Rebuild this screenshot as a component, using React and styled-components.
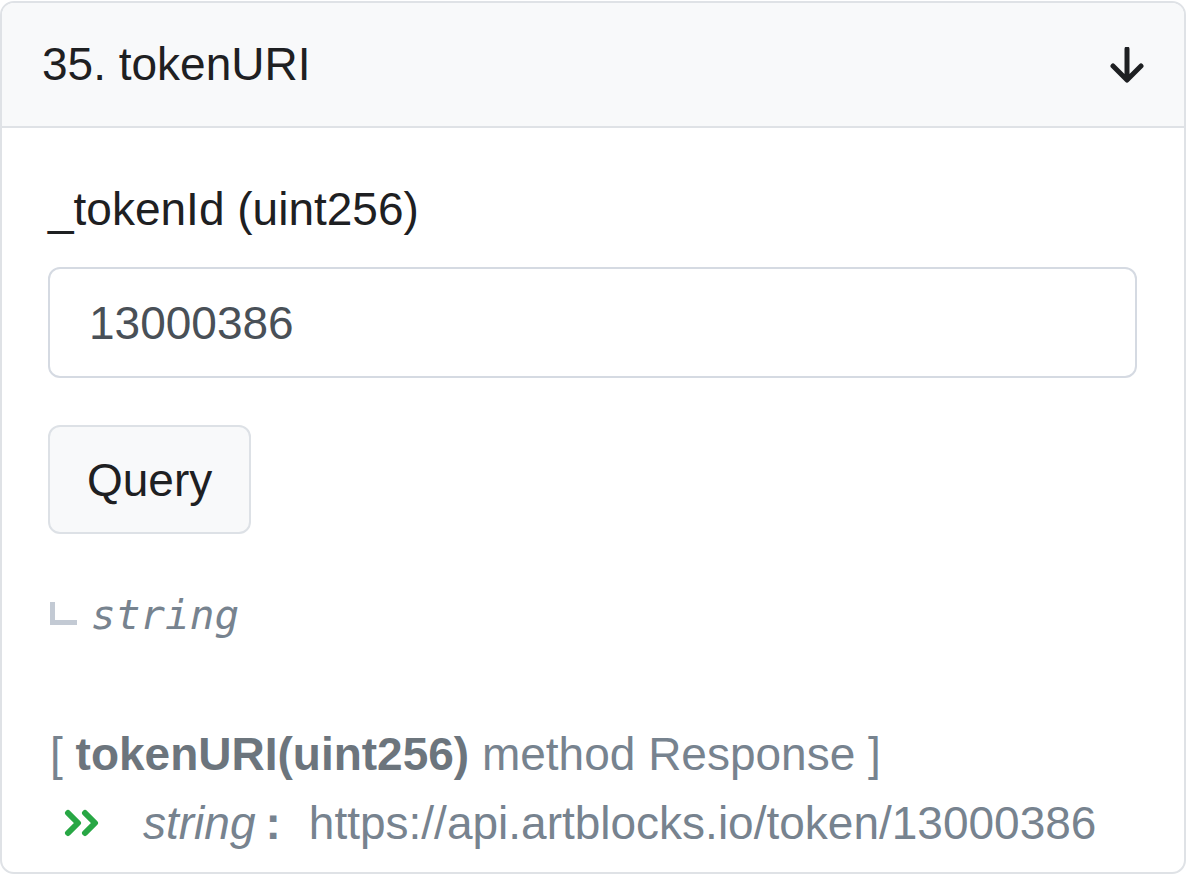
import React from "react";
import styled, { createGlobalStyle } from "styled-components";

const GlobalStyle = createGlobalStyle`
  html, body {
    margin: 0;
    padding: 0;
    background: #ffffff;
  }
  body {
    font-family: "Liberation Sans", Arial, sans-serif;
  }
  * {
    box-sizing: border-box;
  }
`;

const Page = styled.div`
  padding: 1px 1px 0 0;
`;

const Card = styled.div`
  border: 2px solid #dfe2e6;
  border-radius: 14px;
  overflow: hidden;
  background: #fff;
`;

const Header = styled.div`
  display: flex;
  align-items: center;
  justify-content: space-between;
  padding: 27px 40px 27px 40px;
  background: #f8f9fa;
  border-bottom: 2px solid #dfe2e6;
`;

const Title = styled.div`
  font-size: 46px;
  line-height: 1.5;
  color: #1e2022;
`;

const ArrowIcon = styled.svg`
  width: 34px;
  height: 36px;
  margin-right: 0;
`;

const Body = styled.div`
  padding: 47px 47px 14px 46px;
`;

const Label = styled.div`
  font-size: 46px;
  line-height: 1.5;
  color: #1e2022;
`;

const Input = styled.div`
  margin-top: 23px;
  height: 111px;
  display: flex;
  align-items: center;
  padding-left: 39px;
  border: 2px solid #d5dae2;
  border-radius: 12px;
  font-size: 46px;
  color: #495057;
`;

const Button = styled.div`
  margin-top: 47px;
  display: inline-flex;
  align-items: center;
  height: 109px;
  padding: 0 37px;
  background: #f8f9fa;
  border: 2px solid #dde1e6;
  border-radius: 12px;
  font-size: 46px;
  color: #1e2022;
`;

const TypeRow = styled.div`
  margin-top: 51px;
  display: flex;
  align-items: center;
  font-family: "DejaVu Sans Mono", "Liberation Mono", monospace;
  font-style: italic;
  font-size: 41px;
  line-height: 1.5;
  color: #77838f;
`;

const Corner = styled.span`
  display: inline-block;
  width: 27px;
  height: 23px;
  margin: 0 14px 0 2px;
  border-left: 5px solid #c3cad4;
  border-bottom: 5px solid #c3cad4;
  position: relative;
  top: -2px;
`;

const Response = styled.div`
  margin-top: 73px;
  font-size: 46px;
  line-height: 1.5;
  color: #77838f;
  padding-left: 2px;
`;

const Strong = styled.b`
  font-weight: 700;
  color: #6c757d;
`;

const ResultRow = styled.div`
  display: flex;
  align-items: center;
  font-size: 46px;
  line-height: 1.5;
  color: #77838f;
`;

const Chevrons = styled.svg`
  width: 38px;
  height: 28px;
  margin: 0 41px 0 16px;
`;

const TypeName = styled.i`
  font-style: italic;
`;

const Colon = styled.b`
  font-weight: 700;
  margin: 0 28px 0 10px;
`;

export default function App() {
  return (
    <Page>
      <GlobalStyle />
      <Card>
        <Header>
          <Title>35. tokenURI</Title>
          <ArrowIcon viewBox="0 0 34 36">
            <path
              d="M17 2 V32 M3 19 L17 33 L31 19"
              fill="none"
              stroke="#1e2022"
              strokeWidth="5"
              strokeLinecap="round"
              strokeLinejoin="round"
            />
          </ArrowIcon>
        </Header>
        <Body>
          <Label>_tokenId (uint256)</Label>
          <Input>13000386</Input>
          <Button>Query</Button>
          <TypeRow>
            <Corner />
            string
          </TypeRow>
          <Response>
            [ <Strong>tokenURI(uint256)</Strong> method Response ]
          </Response>
          <ResultRow>
            <Chevrons viewBox="0 0 38 28">
              <path
                d="M4 4 L14 14 L4 24 M21 4 L31 14 L21 24"
                fill="none"
                stroke="#28a745"
                strokeWidth="6"
                strokeLinecap="round"
                strokeLinejoin="round"
              />
            </Chevrons>
            <TypeName>string</TypeName>
            <Colon>:</Colon>
            https://api.artblocks.io/token/13000386
          </ResultRow>
        </Body>
      </Card>
    </Page>
  );
}
